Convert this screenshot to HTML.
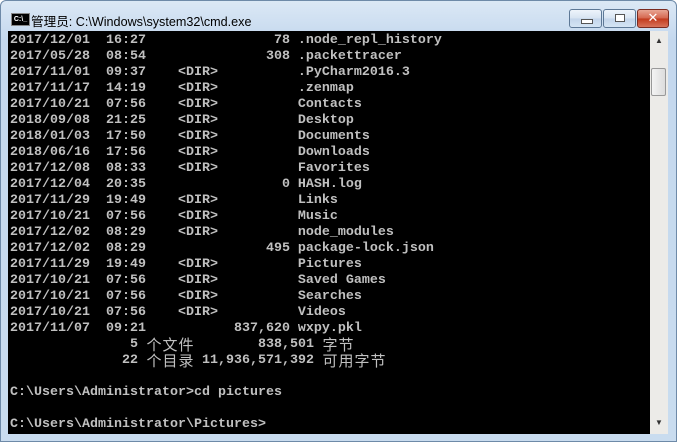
<!DOCTYPE html>
<html><head><meta charset="utf-8"><style>
html,body{margin:0;padding:0;width:677px;height:442px;overflow:hidden;background:#fff;}
.win{position:absolute;left:0;top:0;width:677px;height:442px;background:linear-gradient(#dbe8f5,#c4d8ee 40px,#c9dcef);border-radius:6px 6px 0 0;box-sizing:border-box;border:1px solid #6e8aa8;}
.title{position:absolute;left:30px;top:10px;font:12.6px "Liberation Sans","Noto Sans CJK SC",sans-serif;color:#000;}
.icon{position:absolute;left:10px;top:12px;width:17px;height:11px;background:#000;border:1px solid #888;color:#fff;font:bold 7px "Liberation Sans",sans-serif;line-height:11px;text-align:center;}
.btn{position:absolute;top:8px;height:19px;border:1px solid #5d7896;border-radius:3px;box-sizing:border-box;background:linear-gradient(#eef4fb,#d6e3f1 50%,#c3d5ea 51%,#d4e4f4);}
.close{background:linear-gradient(#e8a593,#d4644c 50%,#c2391c 51%,#d8735a);border-color:#7a2b20;}
.con{position:absolute;left:8px;top:31px;width:642px;height:403px;background:#000;}
.sb{position:absolute;left:650px;top:31px;width:18px;height:403px;background:#ecebe8;}
.thumb{position:absolute;left:1px;top:37px;width:15px;height:28px;border:1px solid #999;border-radius:2px;box-sizing:border-box;background:linear-gradient(90deg,#f4f4f4,#dcdcdc);}
pre{position:absolute;left:10px;top:33px;margin:0;font:bold 13.333px/16px "Liberation Mono",monospace;color:#c0c0c0;}
.c{font:normal 15px/16px "Noto Sans CJK SC","WenQuanYi Zen Hei",sans-serif;display:inline-block;width:16px;height:16px;overflow:hidden;vertical-align:top;text-align:center;}
</style></head><body>
<div class="win">
<div class="icon">C:\_</div>
<div class="title">管理员: C:\Windows\system32\cmd.exe</div>
<div class="btn" style="left:568px;width:33px"><div style="position:absolute;left:11px;top:9px;width:10px;height:3px;background:#fff;border:1px solid #555"></div></div>
<div class="btn" style="left:602px;width:33px"><div style="position:absolute;left:11px;top:4px;width:8px;height:6px;border:1px solid #555;background:#fff"></div></div>
<div class="btn close" style="left:636px;width:32px"><div style="position:absolute;left:0;width:30px;top:0;text-align:center;color:#fff;font:bold 13px/17px 'DejaVu Sans',sans-serif">✕</div></div>
</div>
<div class="con"></div>
<div class="sb"><div style="position:absolute;left:5px;top:5px;font:8px sans-serif;color:#333">▲</div><div class="thumb"></div><div style="position:absolute;left:5px;top:387px;font:8px sans-serif;color:#333">▼</div></div>
<pre>2017/12/01  16:27                78 .node_repl_history
2017/05/28  08:54               308 .packettracer
2017/11/01  09:37    &lt;DIR&gt;          .PyCharm2016.3
2017/11/17  14:19    &lt;DIR&gt;          .zenmap
2017/10/21  07:56    &lt;DIR&gt;          Contacts
2018/09/08  21:25    &lt;DIR&gt;          Desktop
2018/01/03  17:50    &lt;DIR&gt;          Documents
2018/06/16  17:56    &lt;DIR&gt;          Downloads
2017/12/08  08:33    &lt;DIR&gt;          Favorites
2017/12/04  20:35                 0 HASH.log
2017/11/29  19:49    &lt;DIR&gt;          Links
2017/10/21  07:56    &lt;DIR&gt;          Music
2017/12/02  08:29    &lt;DIR&gt;          node_modules
2017/12/02  08:29               495 package-lock.json
2017/11/29  19:49    &lt;DIR&gt;          Pictures
2017/10/21  07:56    &lt;DIR&gt;          Saved Games
2017/10/21  07:56    &lt;DIR&gt;          Searches
2017/10/21  07:56    &lt;DIR&gt;          Videos
2017/11/07  09:21           837,620 wxpy.pkl
               5 <span class="c">个</span><span class="c">文</span><span class="c">件</span>        838,501 <span class="c">字</span><span class="c">节</span>
              22 <span class="c">个</span><span class="c">目</span><span class="c">录</span> 11,936,571,392 <span class="c">可</span><span class="c">用</span><span class="c">字</span><span class="c">节</span>

C:\Users\Administrator&gt;cd pictures

C:\Users\Administrator\Pictures&gt;</pre>
</body></html>
